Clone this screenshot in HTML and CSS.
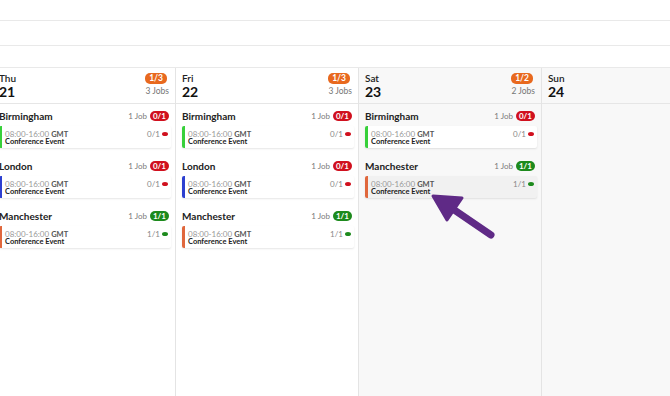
FILE: index.html
```html
<!DOCTYPE html>
<html>
<head>
<meta charset="utf-8">
<link rel="stylesheet" href="styles.css">
</head>
<body>
<div class="page">
  <div class="top-row r1"></div>
  <div class="top-row r2"></div>
  <div class="top-row r3"></div>
  <div class="calendar">
    <div class="day">
      <div class="day-head">
        <div class="day-date"><span class="dname">Thu</span><span class="dnum">21</span></div>
        <div class="day-meta"><span class="badge orange">1/3</span><span class="jobs">3 Jobs</span></div>
      </div>
      <div class="day-body">
        <div class="group">
          <div class="group-head"><span class="loc">Birmingham</span><span class="gmeta"><span class="count">1 Job</span><span class="badge red">0/1</span></span></div>
          <div class="card green-bar"><div class="line1"><span class="time">08:00-16:00 <b>GMT</b></span><span class="fill">0/1<i class="dot red-dot"></i></span></div><div class="title">Conference Event</div></div>
        </div>
        <div class="group">
          <div class="group-head"><span class="loc">London</span><span class="gmeta"><span class="count">1 Job</span><span class="badge red">0/1</span></span></div>
          <div class="card blue-bar"><div class="line1"><span class="time">08:00-16:00 <b>GMT</b></span><span class="fill">0/1<i class="dot red-dot"></i></span></div><div class="title">Conference Event</div></div>
        </div>
        <div class="group">
          <div class="group-head"><span class="loc">Manchester</span><span class="gmeta"><span class="count">1 Job</span><span class="badge green">1/1</span></span></div>
          <div class="card orange-bar"><div class="line1"><span class="time">08:00-16:00 <b>GMT</b></span><span class="fill">1/1<i class="dot green-dot"></i></span></div><div class="title">Conference Event</div></div>
        </div>
      </div>
    </div>
    <div class="day">
      <div class="day-head">
        <div class="day-date"><span class="dname">Fri</span><span class="dnum">22</span></div>
        <div class="day-meta"><span class="badge orange">1/3</span><span class="jobs">3 Jobs</span></div>
      </div>
      <div class="day-body">
        <div class="group">
          <div class="group-head"><span class="loc">Birmingham</span><span class="gmeta"><span class="count">1 Job</span><span class="badge red">0/1</span></span></div>
          <div class="card green-bar"><div class="line1"><span class="time">08:00-16:00 <b>GMT</b></span><span class="fill">0/1<i class="dot red-dot"></i></span></div><div class="title">Conference Event</div></div>
        </div>
        <div class="group">
          <div class="group-head"><span class="loc">London</span><span class="gmeta"><span class="count">1 Job</span><span class="badge red">0/1</span></span></div>
          <div class="card blue-bar"><div class="line1"><span class="time">08:00-16:00 <b>GMT</b></span><span class="fill">0/1<i class="dot red-dot"></i></span></div><div class="title">Conference Event</div></div>
        </div>
        <div class="group">
          <div class="group-head"><span class="loc">Manchester</span><span class="gmeta"><span class="count">1 Job</span><span class="badge green">1/1</span></span></div>
          <div class="card orange-bar"><div class="line1"><span class="time">08:00-16:00 <b>GMT</b></span><span class="fill">1/1<i class="dot green-dot"></i></span></div><div class="title">Conference Event</div></div>
        </div>
      </div>
    </div>
    <div class="day weekend">
      <div class="day-head">
        <div class="day-date"><span class="dname">Sat</span><span class="dnum">23</span></div>
        <div class="day-meta"><span class="badge orange">1/2</span><span class="jobs">2 Jobs</span></div>
      </div>
      <div class="day-body">
        <div class="group">
          <div class="group-head"><span class="loc">Birmingham</span><span class="gmeta"><span class="count">1 Job</span><span class="badge red">0/1</span></span></div>
          <div class="card green-bar"><div class="line1"><span class="time">08:00-16:00 <b>GMT</b></span><span class="fill">0/1<i class="dot red-dot"></i></span></div><div class="title">Conference Event</div></div>
        </div>
        <div class="group">
          <div class="group-head"><span class="loc">Manchester</span><span class="gmeta"><span class="count">1 Job</span><span class="badge green">1/1</span></span></div>
          <div class="card orange-bar hover"><div class="line1"><span class="time">08:00-16:00 <b>GMT</b></span><span class="fill">1/1<i class="dot green-dot"></i></span></div><div class="title">Conference Event</div></div>
        </div>
      </div>
    </div>
    <div class="day weekend last">
      <div class="day-head">
        <div class="day-date"><span class="dname">Sun</span><span class="dnum">24</span></div>
      </div>
      <div class="day-body"></div>
    </div>
  </div>
  <svg class="arrow" width="80" height="60" viewBox="0 0 80 60">
    <line x1="64" y1="46" x2="20" y2="16" stroke="#5f2a86" stroke-width="7" stroke-linecap="round"/>
    <polygon points="6,7 35,9 20,31" fill="#5f2a86" stroke="#5f2a86" stroke-width="3" stroke-linejoin="round"/>
  </svg>
</div>
</body>
</html>
```
FILE: styles.css
```css
* { box-sizing: border-box; }
html, body { margin: 0; padding: 0; background: #fff; }
body {
  font-family: "Lato", "Noto Sans", sans-serif;
  color: #222;
  width: 670px;
  height: 396px;
  overflow: hidden;
}
.page { position: relative; height: 396px; overflow: hidden; }
.top-row { border-bottom: 1px solid #e9e9e9; }
.r1 { height: 21px; }
.r2 { height: 25px; }
.r3 { height: 22px; }

.calendar {
  display: grid;
  grid-template-columns: 183px 183px 183px 1fr;
  margin-left: -7px;
  height: 330px;
}
.day { border-right: 1px solid #e4e4e4; display: flex; flex-direction: column; }
.day.last { border-right: none; }
.weekend { background: #f8f8f8; }

.day-head {
  height: 36px;
  border-bottom: 1px solid #e6e6e6;
  display: flex;
  justify-content: space-between;
  padding: 5px 6px 0 6px;
}
.day-date { display: flex; flex-direction: column; }
.dname { font-size: 10px; line-height: 11px; font-weight: 600; color: #222; }
.dnum { font-size: 14px; line-height: 15px; font-weight: 700; color: #111; }
.day-meta { display: flex; flex-direction: column; align-items: flex-end; }
.jobs { font-size: 8.5px; color: #777; line-height: 10px; margin-top: 2px; }

.badge {
  display: inline-block;
  color: #fff;
  font-weight: 700;
  border-radius: 5px;
  text-align: center;
}
.badge.orange { background: #e8691f; font-size: 8.5px; line-height: 11px; height: 11px; padding: 0 4px; margin-right: 2px; }
.badge.red { background: #d0101e; font-size: 8px; line-height: 10px; height: 10px; padding: 0 3px; border-radius: 5px; min-width: 19px; }
.badge.green { background: #1d8a1d; font-size: 8px; line-height: 10px; height: 10px; padding: 0 3px; border-radius: 5px; min-width: 19px; }

.day-body { padding: 5px 4px 0 6px; }
.group { margin-bottom: 11px; }
.group-head {
  display: flex;
  justify-content: space-between;
  align-items: center;
  height: 14px;
  margin-bottom: 3px;
  padding-right: 2px;
}
.loc { font-size: 10px; font-weight: 700; color: #222; }
.gmeta { display: flex; align-items: center; gap: 3px; }
.count { font-size: 8px; color: #7a7a7a; }

.card {
  height: 22px;
  background: #fff;
  border-left: 3px solid #3c3;
  border-radius: 2px;
  box-shadow: 0 1px 2px rgba(0,0,0,0.10);
  padding: 4px 3px 0 3px;
  font-size: 7.5px;
}
.card.hover { background: #f1f1f1; }
.green-bar { border-left-color: #37d03a; }
.blue-bar { border-left-color: #2c3fd0; }
.orange-bar { border-left-color: #e0673c; }
.line1 { display: flex; justify-content: space-between; align-items: center; line-height: 8px; height: 8px; }
.time { color: #999; font-size: 8px; }
.time b { color: #555; font-weight: 700; font-size: 7.5px; }
.fill { color: #888; display: flex; align-items: center; font-size: 8px; }
.dot { display: inline-block; width: 6px; height: 4px; border-radius: 50%; margin-left: 2px; }
.red-dot { background: #d0101e; }
.green-dot { background: #1d8a1d; }
.title { font-weight: 700; color: #222; line-height: 8px; }

.arrow { position: absolute; left: 427px; top: 189px; }
```
